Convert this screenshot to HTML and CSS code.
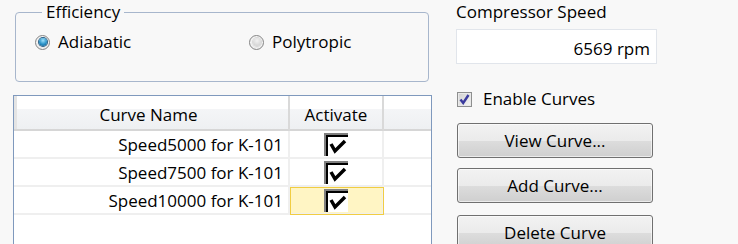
FILE: index.html
```html
<!DOCTYPE html>
<html lang="en">
<head>
  <meta charset="UTF-8" />
  <title>Compressor Curves</title>
  <link rel="stylesheet" href="styles.css">
</head>
<body>
  <div class="panel">
    <div class="left">
      <fieldset class="group">
        <legend>Efficiency</legend>
        <div class="options">
          <label class="opt"><span class="radio on"></span>Adiabatic</label>
          <label class="opt"><span class="radio"></span>Polytropic</label>
        </div>
      </fieldset>

      <div class="grid">
        <div class="row head">
          <div class="cell name">Curve Name</div>
          <div class="cell act">Activate</div>
          <div class="cell fill"></div>
        </div>
        <div class="row">
          <div class="cell name">Speed5000 for K-101</div>
          <div class="cell act"><svg class="tick" width="24" height="23" viewBox="0 0 24 23"><rect width="24" height="23" fill="#fff"/><path d="M0 0H24V2H0Z M0 0H2V23H0Z" fill="#808080"/><path d="M2 2H24V4H2Z M2 2H4V23H2Z" fill="#000"/><path d="M7 11L11 18L21 8" fill="none" stroke="#000" stroke-width="3.5"/></svg></div>
          <div class="cell fill"></div>
        </div>
        <div class="row">
          <div class="cell name">Speed7500 for K-101</div>
          <div class="cell act"><svg class="tick" width="24" height="23" viewBox="0 0 24 23"><rect width="24" height="23" fill="#fff"/><path d="M0 0H24V2H0Z M0 0H2V23H0Z" fill="#808080"/><path d="M2 2H24V4H2Z M2 2H4V23H2Z" fill="#000"/><path d="M7 11L11 18L21 8" fill="none" stroke="#000" stroke-width="3.5"/></svg></div>
          <div class="cell fill"></div>
        </div>
        <div class="row">
          <div class="cell name">Speed10000 for K-101</div>
          <div class="cell act selected"><svg class="tick" width="24" height="23" viewBox="0 0 24 23"><rect width="24" height="23" fill="#fff"/><path d="M0 0H24V2H0Z M0 0H2V23H0Z" fill="#808080"/><path d="M2 2H24V4H2Z M2 2H4V23H2Z" fill="#000"/><path d="M7 11L11 18L21 8" fill="none" stroke="#000" stroke-width="3.5"/></svg></div>
          <div class="cell fill"></div>
        </div>
      </div>
    </div>

    <div class="right">
      <div class="caption">Compressor Speed</div>
      <div class="field">6569 rpm</div>

      <label class="check">
        <span class="box"><svg width="11" height="11" viewBox="0 0 11 11"><path d="M1.5 5.5L4.2 9L9.5 1" fill="none" stroke="#3b3b9e" stroke-width="2.4"/></svg></span>
        Enable Curves
      </label>

      <button class="btn first">View Curve...</button>
      <button class="btn">Add Curve...</button>
      <button class="btn spaced">Delete Curve</button>
    </div>
  </div>
</body>
</html>
```

FILE: styles.css
```css
body {
  margin: 0;
  background-color: #f8f8f8;
  color: #000;
  font-family: 'Open Sans', sans-serif;
  font-size: 17px;
  line-height: 20px;
}
.panel {
  display: flex;
  padding-left: 13px;
  height: 244px;
  overflow: hidden;
}
.left {
  width: 419px;
}

/* efficiency group */
.group {
  margin: 0 3px 0 2px;
  padding: 8px 0 29px 19px;
  border: 1px solid #a7b6cc;
  border-radius: 4px;
}
.group legend {
  margin-left: 7px;
  padding: 0 4px 1px;
  line-height: 23px;
}
.options {
  display: grid;
  grid-template-columns: 214px auto;
}
.opt {
  display: flex;
  align-items: center;
  gap: 8px;
}
.radio {
  position: relative;
  width: 13px;
  height: 13px;
  border: 1px solid #858585;
  border-radius: 50%;
  background: radial-gradient(circle at 50% 40%, #fdfdfd 30%, #d2d2d2 100%);
  box-shadow: inset 0 0 0 1px #f4f4f4;
}
.radio::after {
  content: '';
  position: absolute;
  left: 2.5px;
  top: 2.5px;
  width: 8px;
  height: 8px;
  border-radius: 50%;
  background: radial-gradient(circle at 50% 35%, #f2f2f2, #cbcbcb);
  box-shadow: 0 0 0 1px #d8d8d8;
}
.radio.on::after {
  background: radial-gradient(circle at 50% 30%, #9fe0fb 0%, #2a93c8 55%, #14598a 100%);
  box-shadow: 0 0 0 1px #285f86;
}

/* curve grid */
.grid {
  margin-top: 13px;
  height: 300px;
  background-color: #fff;
  border: 1px solid #7f99bd;
}
.row {
  display: grid;
  grid-template-columns: 276px 94px 1fr;
}
.cell {
  box-sizing: border-box;
  height: 28px;
  padding-top: 4px;
  border-right: 2px solid #efefef;
  border-bottom: 2px solid #efefef;
}
.cell.name {
  text-align: right;
  padding-right: 5px;
}
.cell.act {
  display: flex;
  justify-content: center;
  padding-top: 2px;
}
.cell.fill {
  border-right: none;
}
.head .cell {
  height: 35px;
  padding-top: 9px;
  text-align: center;
  background: linear-gradient(#fff 0%, #fff 38%, #f4f5f7 40%, #eef0f2 100%);
  border-right-color: #d9d9d9;
  border-bottom-color: #d6d6d6;
}
.head .cell.name {
  box-shadow: inset 3px 0 0 #e4e4e4;
}
.head .cell.act {
  padding-top: 9px;
}
.cell.selected {
  background-color: #fff5c4;
  outline: 1px solid #f1cd42;
  outline-offset: -1px;
}
.tick {
  display: block;
}

/* right column */
.right {
  margin-left: 24px;
  width: 210px;
}
.caption {
  line-height: 23px;
}
.field {
  box-sizing: border-box;
  width: 201px;
  height: 35px;
  margin-top: 6px;
  padding: 9px 6px 0 0;
  text-align: right;
  background-color: #fff;
  border: 1px solid #e1e5eb;
}
.check {
  display: flex;
  align-items: center;
  gap: 11px;
  margin: 25px 0 0 1px;
}
.box {
  box-sizing: border-box;
  display: flex;
  align-items: center;
  justify-content: center;
  width: 15px;
  height: 15px;
  border: 1px solid #8e8f8f;
  background: linear-gradient(135deg, #cfcfcf, #f6f6f6);
  box-shadow: inset 0 0 0 1px #e9e9e9;
}
.btn {
  display: block;
  box-sizing: border-box;
  width: 196px;
  height: 35px;
  margin: 10px 0 0 1px;
  padding: 0;
  font-family: inherit;
  font-size: 17px;
  line-height: 20px;
  color: #000;
  border: 1px solid #707070;
  border-radius: 3px;
  background: linear-gradient(#f2f2f2 0%, #ebebeb 50%, #dddddd 50%, #cfcfcf 100%);
  box-shadow: inset 0 0 0 1px rgba(255, 255, 255, 0.6);
}
.btn.first {
  margin-top: 14px;
}
.btn.spaced {
  margin-top: 12px;
}
```
